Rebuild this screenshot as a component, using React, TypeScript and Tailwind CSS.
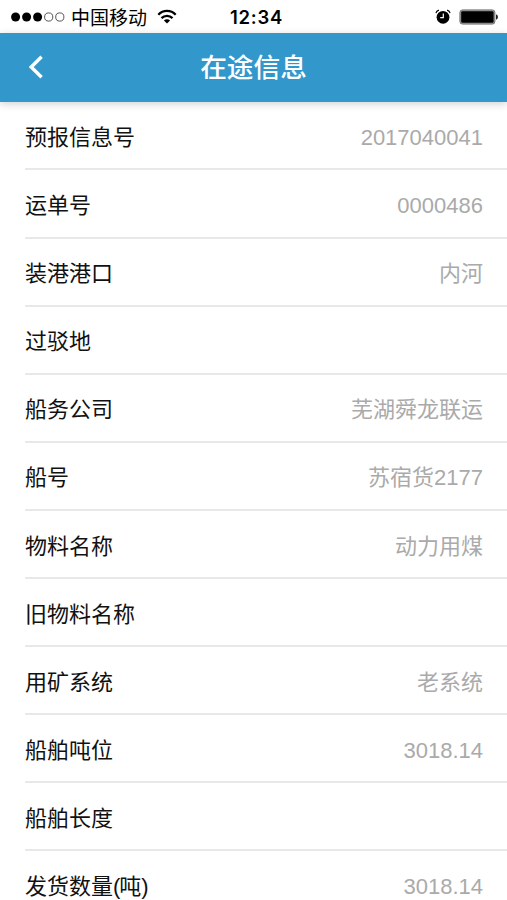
const rows: { label: string; value?: string }[] = [
  { label: '预报信息号', value: '2017040041' },
  { label: '运单号', value: '0000486' },
  { label: '装港港口', value: '内河' },
  { label: '过驳地' },
  { label: '船务公司', value: '芜湖舜龙联运' },
  { label: '船号', value: '苏宿货2177' },
  { label: '物料名称', value: '动力用煤' },
  { label: '旧物料名称' },
  { label: '用矿系统', value: '老系统' },
  { label: '船舶吨位', value: '3018.14' },
  { label: '船舶长度' },
  { label: '发货数量(吨)', value: '3018.14' },
];

function StatusBar() {
  return (
    <div className="grid h-[33px] shrink-0 grid-cols-[1fr_auto_1fr] items-center bg-white pt-px text-black">
      <div className="flex items-center pl-[11px]">
        <svg width="55" height="10" viewBox="0 0 55 10" className="shrink-0">
          <circle cx="4.6" cy="5" r="4.5" />
          <circle cx="15.6" cy="5" r="4.5" />
          <circle cx="26.6" cy="5" r="4.5" />
          <circle cx="37.7" cy="5" r="4.1" fill="none" stroke="#444" strokeWidth="0.9" />
          <circle cx="48.8" cy="5" r="4.1" fill="none" stroke="#444" strokeWidth="0.9" />
        </svg>
        <span className="ml-[5px] pt-[2px] text-[19px] leading-none whitespace-nowrap">中国移动</span>
        <svg width="20" height="16" viewBox="0 0 20 16" className="ml-[10px] shrink-0" fill="none" stroke="#000" strokeWidth="2.3">
          <path d="M1.3 5.7C6.2.7 13.8.7 18.7 5.7" />
          <path d="M4.5 9.1C7.6 6 12.4 6 15.5 9.1" />
          <path d="M10 14.6 6.9 11.4C8.7 9.8 11.3 9.8 13.1 11.4Z" fill="#000" stroke="none" />
        </svg>
      </div>
      <span className="pl-[6px] font-[Inter,sans-serif] text-[18.5px] leading-none font-semibold tracking-[0.7px]">12:34</span>
      <div className="flex items-center justify-end pr-[8px]">
        <svg width="16" height="16" viewBox="0 0 16 16" className="shrink-0">
          <circle cx="8" cy="8.3" r="6.4" />
          <path d="M8.3 4.5v4.2H5.2" fill="none" stroke="#fff" strokeWidth="1.2" />
          <path d="M.9 4.2Q1.4 1.8 3.9 1.1M15.1 4.2Q14.6 1.8 12.1 1.1" fill="none" stroke="#000" strokeWidth="1.1" />
        </svg>
        <svg width="40" height="16" viewBox="0 0 40 16" className="ml-[8px] shrink-0">
          <rect x=".9" y=".9" width="35" height="14.2" rx="2.6" fill="#999" stroke="#777" strokeWidth="1" />
          <rect x="2.2" y="2.2" width="32.4" height="11.6" rx="1.4" />
          <path d="M37 5.3q2 .5 2 2.7t-2 2.7z" fill="#222" />
        </svg>
      </div>
    </div>
  );
}

function Header() {
  return (
    <header className="z-10 grid h-[69px] shrink-0 grid-cols-[1fr_auto_1fr] items-center bg-[#3298cc] text-white shadow-[0_2px_8px_rgba(0,0,0,0.18)]">
      <svg width="16" height="24" viewBox="0 0 16 24" className="ml-7 -mt-0.5" fill="none" stroke="#fff" strokeWidth="3.4">
        <path d="M13.6 1.8 3.2 12l10.4 10.2" />
      </svg>
      <h1 className="pt-[2px] text-[26.7px] leading-none font-medium">在途信息</h1>
      <span />
    </header>
  );
}

export default function App() {
  return (
    <div className="flex h-[900px] w-[507px] flex-col overflow-hidden bg-white font-['Liberation_Sans','Noto_Sans_CJK_SC',sans-serif]">
      <StatusBar />
      <Header />
      <ul className="flex-1 overflow-hidden pt-[0.4px] pl-[25px]">
        {rows.map((row) => (
          <li
            key={row.label}
            className="flex h-[68.1px] items-center justify-between border-b-2 border-[#e8e8e8] pt-[5px] pr-6 text-[22px] leading-none"
          >
            <span className="text-[#111]">
              {row.label.split(/([()])/).map((part, i) =>
                part === '(' || part === ')' ? (
                  <span key={i} className="tracking-[-1px]">{part}</span>
                ) : (
                  part
                ),
              )}
            </span>
            <span className="text-[#aaa]">{row.value}</span>
          </li>
        ))}
      </ul>
    </div>
  );
}
